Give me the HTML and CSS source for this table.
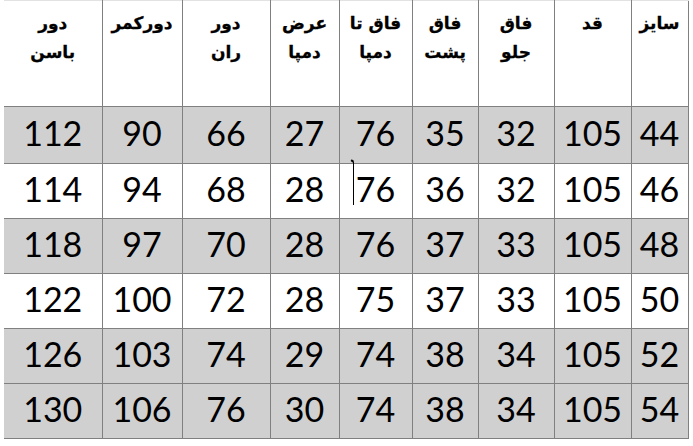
FILE: index.html
```html
<!DOCTYPE html>
<html lang="fa">
<head>
<meta charset="utf-8">
<title>جدول سایز</title>
<link rel="stylesheet" href="styles.css">
</head>
<body>
<table class="sizes" dir="rtl">
  <colgroup>
    <col class="c-size"><col class="c-qad"><col class="c-front"><col class="c-back"><col class="c-hem"><col class="c-width"><col class="c-thigh"><col class="c-waist"><col class="c-hip">
  </colgroup>
  <thead>
    <tr class="head">
      <th>سایز</th>
      <th>قد</th>
      <th>فاق<br>جلو</th>
      <th>فاق<br>پشت</th>
      <th>فاق تا<br>دمپا</th>
      <th>عرض<br>دمپا</th>
      <th>دور<br>ران</th>
      <th>دورکمر</th>
      <th>دور<br>باسن</th>
    </tr>
  </thead>
  <tbody>
    <tr class="r1 shade"><td>44</td><td>105</td><td>32</td><td>35</td><td>76</td><td>27</td><td>66</td><td>90</td><td>112</td></tr>
    <tr class="plain"><td>46</td><td>105</td><td>32</td><td>36</td><td><span class="caret">76</span></td><td>28</td><td>68</td><td>94</td><td>114</td></tr>
    <tr class="shade"><td>48</td><td>105</td><td>33</td><td>37</td><td>76</td><td>28</td><td>70</td><td>97</td><td>118</td></tr>
    <tr class="plain"><td>50</td><td>105</td><td>33</td><td>37</td><td>75</td><td>28</td><td>72</td><td>100</td><td>122</td></tr>
    <tr class="shade"><td>52</td><td>105</td><td>34</td><td>38</td><td>74</td><td>29</td><td>74</td><td>103</td><td>126</td></tr>
    <tr class="shade"><td>54</td><td>105</td><td>34</td><td>38</td><td>74</td><td>30</td><td>76</td><td>106</td><td>130</td></tr>
  </tbody>
</table>
</body>
</html>
```

FILE: styles.css
```css
html, body {
  margin: 0;
  padding: 0;
  background: #ffffff;
}

.sizes {
  margin-left: 4px;
  width: 684px;
  table-layout: fixed;
  border-collapse: collapse;
  border-top: 1px solid #e2e2e2;
  border-bottom: 1px solid #808080;
  border-left: none;
  border-right: 1px solid #808080;
}

.c-size { width: 57px; }
.c-qad { width: 77px; }
.c-front { width: 76px; }
.c-back { width: 66px; }
.c-hem { width: 73px; }
.c-width { width: 69px; }
.c-thigh { width: 88px; }
.c-waist { width: 80px; }
.c-hip { width: 98px; }

.sizes th,
.sizes td {
  padding: 0;
  border: 1px solid #808080;
  text-align: center;
  color: #000000;
}

.sizes th:last-child,
.sizes td:last-child {
  border-left: none;
}

.head th {
  height: 97px;
  vertical-align: top;
  padding-top: 8px;
  font-family: "DejaVu Sans", sans-serif;
  font-weight: bold;
  font-size: 17px;
  line-height: 29px;
  -webkit-text-stroke: 0.3px #000000;
  border-top: 1px solid #e2e2e2;
}

.sizes td {
  height: 49px;
  vertical-align: middle;
  padding-bottom: 5px;
  font-family: Lato, "Open Sans", sans-serif;
  font-size: 34px;
  line-height: 36px;
  font-weight: normal;
}

.sizes tr.r1 td {
  height: 51px;
}

.shade td {
  background: #d0d0d0;
}

.plain td {
  background: #ffffff;
}

.caret {
  position: relative;
}

.caret::before {
  content: "";
  position: absolute;
  left: -3px;
  top: -6px;
  width: 1.5px;
  height: 43px;
  background: #000000;
}

.caret::after {
  content: "";
  position: absolute;
  left: -5px;
  top: -8px;
  width: 3px;
  height: 1.5px;
  background: #000000;
  transform: rotate(35deg);
}
```
